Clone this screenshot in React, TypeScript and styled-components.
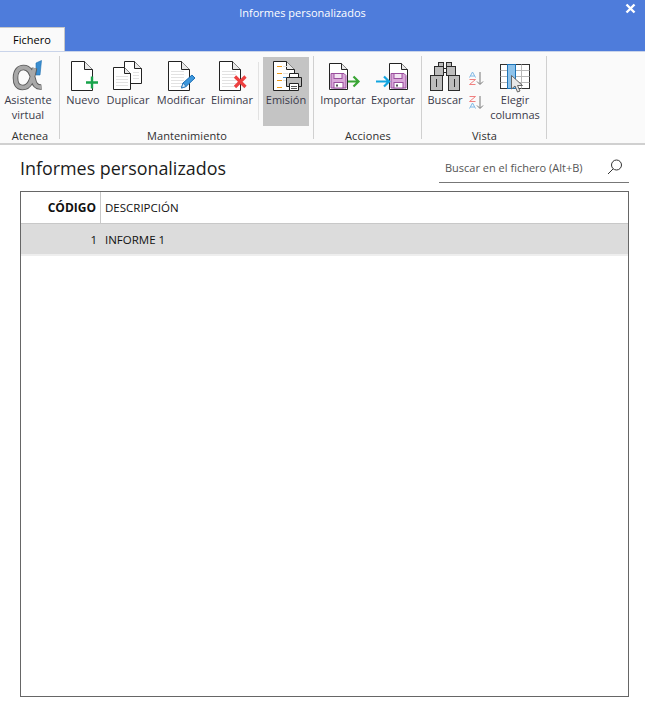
import React from "react";
import styled, { createGlobalStyle } from "styled-components";

const Global = createGlobalStyle`
  html, body { margin: 0; padding: 0; background: #fff; }
  body { font-family: "Open Sans", "Noto Sans", "Liberation Sans", sans-serif; }
  * { box-sizing: border-box; }
`;

const Page = styled.div`
  width: 645px; height: 714px; display: flex; flex-direction: column; overflow: hidden; background: #fff;
`;
const TitleBar = styled.header`
  height: 52px; background: #4e7cdb; display: flex; flex-direction: column; position: relative;
  border-bottom: 1px solid #c9d4ea;
`;
const TitleText = styled.div`
  height: 27px; line-height: 26px; text-align: center; color: #fff; font-size: 11px; padding-right: 40px;
`;
const Close = styled.svg`
  position: absolute; right: 9px; top: 3px;
`;
const Tab = styled.div`
  width: 65px; height: 24px; background: #fafafa; color: #000; font-size: 11px;
  border-top: 1px solid #c8c8c8; border-right: 1px solid #c8c8c8; text-align: center; line-height: 24px;
`;
const Ribbon = styled.nav`
  height: 93px; background: #fafafa; border-bottom: 2px solid #d0d0d0; display: flex; padding: 4px 0 4px;
`;
const Group = styled.section<{ $w: number }>`
  width: ${p => p.$w}px; display: flex; flex-direction: column; border-right: 1px solid #d0d0d0;
`;
const GroupItems = styled.div<{ $pad?: number }>`
  flex: 1; display: flex; gap: 5px; padding-left: ${p => p.$pad ?? 0}px; padding-top: 1px; align-items: stretch;
`;
const GroupLabel = styled.div`
  height: 14px; line-height: 20px; text-align: center; font-size: 11px; color: #2f2f2f; letter-spacing: .1px; white-space: nowrap; padding-left: 1px;
`;
const Btn = styled.div<{ $w: number; $active?: boolean }>`
  width: ${p => p.$w}px; height: 69px; display: flex; flex-direction: column; align-items: center; padding-top: 3px;
  background: ${p => (p.$active ? "#c4c4c4" : "transparent")};
  font-size: 11px; line-height: 15px; color: #3a3a4a; text-align: center; white-space: nowrap;
`;
const BtnIcon = styled.svg`
  width: 34px; height: 32px; flex: none; overflow: visible;
`;
const VDivider = styled.div`
  width: 1px; height: 58px; background: #e2e2e2; margin-top: 5px; margin-right: -1px;
`;
const SortCol = styled.div`
  width: 18px; display: flex; flex-direction: column; gap: 9px; padding-top: 14px; margin-left: 1px; margin-right: -1px;
`;
const Main = styled.main`
  flex: 1; display: flex; flex-direction: column; padding: 7px 16px 17px 20px; min-height: 0;
`;
const Head = styled.div`
  height: 39px; display: flex; justify-content: space-between; align-items: flex-start;
`;
const Title = styled.h1`
  margin: 0; font-size: 17.9px; font-weight: 400; line-height: 32px; color: #1b1b1b;
`;
const Search = styled.div`
  width: 190px; height: 31px; border-bottom: 1px solid #777; display: flex; justify-content: space-between; align-items: center;
  padding: 0 6px; font-size: 11px; color: #555;
`;
const Table = styled.div`
  flex: 1; border: 1px solid #666; display: flex; flex-direction: column;
`;
const HeaderRow = styled.div`
  height: 32px; display: grid; grid-template-columns: 80px 1fr; border-bottom: 1px solid #c8c8c8;
`;
const DataRow = styled.div`
  height: 32px; display: grid; grid-template-columns: 80px 1fr; background: #dcdcdc; border-bottom: 2px solid #eee;
`;
const CodeHead = styled.div`
  text-align: right; padding-right: 4px; font-weight: 700; font-size: 12px; line-height: 32px; color: #111; border-right: 1px solid #c8c8c8;
`;
const DescHead = styled.div`
  padding-left: 4px; font-size: 11.5px; line-height: 32px; color: #111;
`;
const CodeCell = styled.div`
  text-align: right; padding-right: 4px; font-size: 11.5px; line-height: 32px; color: #111;
`;
const DescCell = styled.div`
  padding-left: 4px; font-size: 11.5px; line-height: 32px; color: #111;
`;

const ink = "#222";
const Doc = ({ x = 4.5, w = 21, top = 1.5, h = 29, f = 8 }: { x?: number; w?: number; top?: number; h?: number; f?: number }) => (
  <g fill="none" stroke={ink} strokeWidth="1">
    <path d={`M${x} ${top}H${x + w - f}L${x + w} ${top + f}V${top + h}H${x}Z`} fill="#fff" />
    <path d={`M${x + w - f} ${top}V${top + f}H${x + w}`} fill="#e8e8e8" />
  </g>
);
const Lines = ({ x, w, ys }: { x: number; w: number; ys: number[] }) => (
  <g stroke="#e2e2e2" strokeWidth="1">
    {ys.map(y => <path key={y} d={`M${x} ${y + 0.5}h${w}`} />)}
  </g>
);
const Floppy = ({ x }: { x: number }) => (
  <g>
    <path d={`M${x} 13.5h13l2 2v12.5h-15z`} fill="#d9a8d9" stroke="#9a4f9e" strokeWidth="1" />
    <rect x={x + 3} y={13.5} width={8} height={5} fill="#f3e6f3" stroke="#9a4f9e" />
    <rect x={x + 3} y={22.5} width={9} height={5.5} fill="#fff" stroke="#9a4f9e" />
    <rect x={x + 5} y={24.5} width={2} height={2} fill="#555" />
  </g>
);

const alphaD = "M23.5 8 C21.5 17 20 27.5 11.5 27.5 C6 27.5 4.5 23 4.5 18 C4.5 11 8 7.5 12.5 7.5 C19 7.5 21 14 22.5 20 C23.5 25 26 27.5 30.5 27";
const Alpha = () => (
  <BtnIcon viewBox="0 0 34 32">
    <path d="M25 3 L30.5 0.5 L29 15 L25 15 Z" fill="#3b8ed0" stroke="#1f6fb0" strokeWidth=".6" />
    <path d={alphaD} fill="none" stroke="#5a5a5a" strokeWidth="5.6" />
    <path d={alphaD} fill="none" stroke="#a8a8a8" strokeWidth="3.8" />
  </BtnIcon>
);
const Nuevo = () => (
  <BtnIcon viewBox="0 0 34 32">
    <Doc x={5.5} />
    <path d="M20 22.5H32M26 16.5V28.5" stroke="#17a34a" strokeWidth="2.4" />
  </BtnIcon>
);
const Duplicar = () => (
  <BtnIcon viewBox="0 0 34 32">
    <Doc x={13.5} w={17} h={22} f={7} />
    <Lines x={22} w={6} ys={[12, 15, 18]} />
    <Doc x={2.5} top={7.5} w={17} h={22} f={6} />
    <Lines x={5} w={12} ys={[16, 19, 22, 25]} />
  </BtnIcon>
);
const Modificar = () => (
  <BtnIcon viewBox="0 0 34 32">
    <Doc x={4.5} />
    <Lines x={7} w={13} ys={[11, 14, 17, 20, 23, 26]} />
    <path d="M17.5 28 L19 23 L28 15 L31 18 L22 26.5 Z" fill="#3d97dc" stroke="#1c6fb5" strokeWidth="1" />
    <path d="M17.5 28 L19 23 L22 26.5 Z" fill="#dfeefa" stroke="#1c6fb5" strokeWidth=".8" />
  </BtnIcon>
);
const Eliminar = () => (
  <BtnIcon viewBox="0 0 34 32">
    <Doc x={4.5} />
    <Lines x={7} w={14} ys={[11, 14, 17, 20, 23, 26]} />
    <path d="M20 16.5L30.5 27M30.5 16.5L20 27" stroke="#ec4040" strokeWidth="3.2" />
  </BtnIcon>
);
const Emision = () => (
  <BtnIcon viewBox="0 0 34 32">
    <Doc x={4.5} />
    <g stroke="#ef9a1a" strokeWidth="1">
      <path d="M8 6.5h5M8 13.5h5M8 20.5h5M8 27.5h5" />
    </g>
    <Lines x={14} w={5} ys={[6, 13, 20]} />
    <path d="M20.5 13.5h9v4h-9z" fill="#fff" stroke={ink} />
    <path d="M17.5 17.5h15v9h-15z" fill="#bdbdbd" stroke={ink} />
    <path d="M20.5 23.5h9v7h-9z" fill="#fff" stroke={ink} />
    <path d="M22 26.5h6M22 28.5h6" stroke="#555" />
    <path d="M14 17.5h3" stroke="#3b8ed0" />
  </BtnIcon>
);
const Importar = () => (
  <BtnIcon viewBox="0 0 34 32">
    <Doc x={3.5} top={3.5} w={18} h={26} f={6} />
    <Floppy x={5} />
    <path d="M22 21.5H32M27.5 16.5L32.5 21.5L27.5 26.5" fill="none" stroke="#3aa535" strokeWidth="2.2" />
  </BtnIcon>
);
const Exportar = () => (
  <BtnIcon viewBox="0 0 34 32">
    <Doc x={13.5} top={3.5} w={18} h={26} f={6} />
    <Floppy x={15} />
    <path d="M0 21.5H12M8 16.5L13 21.5L8 26.5" fill="none" stroke="#12a5e0" strokeWidth="2.2" />
  </BtnIcon>
);
const Buscar = () => (
  <BtnIcon viewBox="0 0 34 32">
    <g fill="#bdbdbd" stroke="#2b2b2b" strokeWidth="1">
      <rect x="10.5" y="2.5" width="5" height="4" />
      <rect x="18.5" y="2.5" width="5" height="4" />
      <rect x="6.5" y="6.5" width="9" height="9" />
      <rect x="18.5" y="6.5" width="9" height="9" />
      <rect x="2.5" y="15.5" width="12" height="15" />
      <rect x="20.5" y="15.5" width="11" height="15" />
      <rect x="15.5" y="8.5" width="3" height="4" fill="#fff" />
    </g>
    <path d="M8.5 19v8M26.5 19v8" stroke="#2b2b2b" />
  </BtnIcon>
);
const Sort = ({ down }: { down?: boolean }) => (
  <svg width="16" height="15" viewBox="0 0 16 15">
    <g fill="none" strokeWidth="1">
      <path d={down ? "M1.5 1.5h6L1.5 6.5h6" : "M1.5 6.5L4.5 1L7.5 6.5M2.5 5h4"} stroke={down ? "#f08080" : "#7fb8e6"} />
      <path d={down ? "M1.5 13.5L4.5 8L7.5 13.5M2.5 12h4" : "M1.5 8.5h6L1.5 13.5h6"} stroke={down ? "#7fb8e6" : "#f08080"} />
      <path d="M12 1v12M9 10.5L12 13.5L15 10.5" stroke="#777" />
    </g>
  </svg>
);
const Elegir = () => (
  <BtnIcon viewBox="0 0 34 32">
    <rect x="2.5" y="4.5" width="29" height="24" fill="#fff" stroke="#333" />
    <path d="M2.5 10.5h29M2.5 16.5h29M2.5 22.5h29M10.5 4.5v24M23.5 4.5v24" stroke="#b8b8b8" />
    <rect x="9.5" y="4.5" width="8" height="24" fill="#8fc3ea" stroke="#1d74b8" />
    <path d="M13.5 15.5V29L17 26L19.5 32L22 31L19.5 25.5H24.5Z" fill="#e8e8e8" stroke="#666" />
  </BtnIcon>
);

export default function App() {
  return (
    <Page>
      <Global />
      <TitleBar>
        <TitleText>Informes personalizados</TitleText>
        <Close width="11" height="11" viewBox="0 0 11 11"><path d="M1.5 1.5L9.5 9.5M9.5 1.5L1.5 9.5" stroke="#fff" strokeWidth="2.4" /></Close>
        <Tab>Fichero</Tab>
      </TitleBar>
      <Ribbon>
        <Group $w={60}>
          <GroupItems>
            <Btn $w={56}><Alpha />Asistente<br />virtual</Btn>
          </GroupItems>
          <GroupLabel>Atenea</GroupLabel>
        </Group>
        <Group $w={254}>
          <GroupItems $pad={6}>
            <Btn $w={34}><Nuevo />Nuevo</Btn>
            <Btn $w={46}><Duplicar />Duplicar</Btn>
            <Btn $w={50}><Modificar />Modificar</Btn>
            <Btn $w={42}><Eliminar />Eliminar</Btn>
            <VDivider />
            <Btn $w={46} $active><Emision />Emisión</Btn>
          </GroupItems>
          <GroupLabel>Mantenimiento</GroupLabel>
        </Group>
        <Group $w={108}>
          <GroupItems $pad={6}>
            <Btn $w={46}><Importar />Importar</Btn>
            <Btn $w={44}><Exportar />Exportar</Btn>
          </GroupItems>
          <GroupLabel>Acciones</GroupLabel>
        </Group>
        <Group $w={125}>
          <GroupItems $pad={6}>
            <Btn $w={34}><Buscar />Buscar</Btn>
            <SortCol><Sort /><Sort down /></SortCol>
            <Btn $w={50}><Elegir />Elegir<br />columnas</Btn>
          </GroupItems>
          <GroupLabel>Vista</GroupLabel>
        </Group>
      </Ribbon>
      <Main>
        <Head>
          <Title>Informes personalizados</Title>
          <Search>
            <span>Buscar en el fichero (Alt+B)</span>
            <svg width="16" height="16" viewBox="0 0 16 16"><circle cx="9.5" cy="6" r="5" fill="none" stroke="#333" /><path d="M6 10L1 15" stroke="#333" /></svg>
          </Search>
        </Head>
        <Table>
          <HeaderRow>
            <CodeHead>CÓDIGO</CodeHead>
            <DescHead>DESCRIPCIÓN</DescHead>
          </HeaderRow>
          <DataRow>
            <CodeCell>1</CodeCell>
            <DescCell>INFORME 1</DescCell>
          </DataRow>
        </Table>
      </Main>
    </Page>
  );
}
